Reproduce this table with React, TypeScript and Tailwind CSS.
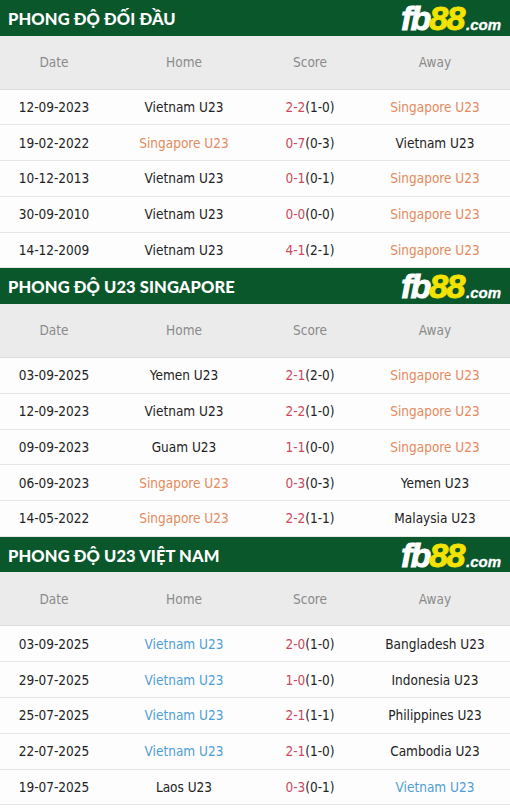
import React from "react";

type C = "o" | "b" | "d";
type Row = { date: string; home: string; hc: C; score: string; half: string; away: string; ac: C };

const sections: { title: string; rows: Row[] }[] = [
  {
    title: "PHONG ĐỘ ĐỐI ĐẦU",
    rows: [
      { date: "12-09-2023", home: "Vietnam U23", hc: "d", score: "2-2", half: "(1-0)", away: "Singapore U23", ac: "o" },
      { date: "19-02-2022", home: "Singapore U23", hc: "o", score: "0-7", half: "(0-3)", away: "Vietnam U23", ac: "d" },
      { date: "10-12-2013", home: "Vietnam U23", hc: "d", score: "0-1", half: "(0-1)", away: "Singapore U23", ac: "o" },
      { date: "30-09-2010", home: "Vietnam U23", hc: "d", score: "0-0", half: "(0-0)", away: "Singapore U23", ac: "o" },
      { date: "14-12-2009", home: "Vietnam U23", hc: "d", score: "4-1", half: "(2-1)", away: "Singapore U23", ac: "o" },
    ],
  },
  {
    title: "PHONG ĐỘ U23 SINGAPORE",
    rows: [
      { date: "03-09-2025", home: "Yemen U23", hc: "d", score: "2-1", half: "(2-0)", away: "Singapore U23", ac: "o" },
      { date: "12-09-2023", home: "Vietnam U23", hc: "d", score: "2-2", half: "(1-0)", away: "Singapore U23", ac: "o" },
      { date: "09-09-2023", home: "Guam U23", hc: "d", score: "1-1", half: "(0-0)", away: "Singapore U23", ac: "o" },
      { date: "06-09-2023", home: "Singapore U23", hc: "o", score: "0-3", half: "(0-3)", away: "Yemen U23", ac: "d" },
      { date: "14-05-2022", home: "Singapore U23", hc: "o", score: "2-2", half: "(1-1)", away: "Malaysia U23", ac: "d" },
    ],
  },
  {
    title: "PHONG ĐỘ U23 VIỆT NAM",
    rows: [
      { date: "03-09-2025", home: "Vietnam U23", hc: "b", score: "2-0", half: "(1-0)", away: "Bangladesh U23", ac: "d" },
      { date: "29-07-2025", home: "Vietnam U23", hc: "b", score: "1-0", half: "(1-0)", away: "Indonesia U23", ac: "d" },
      { date: "25-07-2025", home: "Vietnam U23", hc: "b", score: "2-1", half: "(1-1)", away: "Philippines U23", ac: "d" },
      { date: "22-07-2025", home: "Vietnam U23", hc: "b", score: "2-1", half: "(1-0)", away: "Cambodia U23", ac: "d" },
      { date: "19-07-2025", home: "Laos U23", hc: "d", score: "0-3", half: "(0-1)", away: "Vietnam U23", ac: "b" },
    ],
  },
];

function colorClass(c: C) {
  if (c === "o") return "text-[#e58a5c]";
  if (c === "b") return "text-[#4f9dd6]";
  return "text-[#222222]";
}

function Logo() {
  return (
    <div className="flex items-baseline italic font-['Liberation_Sans',Arial,sans-serif] font-bold leading-none font-stretch-normal">
      <span className="text-[34px] text-white tracking-[-2px] [-webkit-text-stroke:0.9px_white]">fb</span>
      <span className="text-[34px] text-[#f4e300] tracking-[-1.5px] [-webkit-text-stroke:0.9px_#f4e300]">88</span>
      <span className="text-[15px] text-white ml-[2px] [-webkit-text-stroke:0.3px_white]">.com</span>
    </div>
  );
}

export default function App() {
  return (
    <div className="w-[510px] bg-white font-['DejaVu_Sans',sans-serif] font-stretch-condensed">
      {sections.map((s) => (
        <div key={s.title}>
          <div className="h-[35.5px] bg-[#0b572c] flex items-center justify-between pl-[8px] pr-[9px] overflow-hidden">
            <span className="text-white text-[16.5px] font-black font-['Lato',sans-serif] tracking-[0.1px] font-stretch-normal pt-[3px]">
              {s.title}
            </span>
            <Logo />
          </div>
          <div className="h-[54px] bg-[#ebebeb] grid grid-cols-[108px_152px_100px_150px] items-center text-[13.5px] text-[#8a8a8a] text-center border-b border-[#dcdcdc]">
            <div>Date</div>
            <div>Home</div>
            <div>Score</div>
            <div>Away</div>
          </div>
          {s.rows.map((r, i) => (
            <div
              key={i}
              className="h-[35.8px] bg-[#fdfdfd] grid grid-cols-[108px_152px_100px_150px] items-center text-[13.5px] text-center border-b border-[#e6e6e6]"
            >
              <div className="text-[#222222]">{r.date}</div>
              <div className={colorClass(r.hc)}>{r.home}</div>
              <div className="text-[#222222]">
                <span className="text-[#c94a5c]">{r.score}</span>
                {r.half}
              </div>
              <div className={colorClass(r.ac)}>{r.away}</div>
            </div>
          ))}
        </div>
      ))}
    </div>
  );
}
